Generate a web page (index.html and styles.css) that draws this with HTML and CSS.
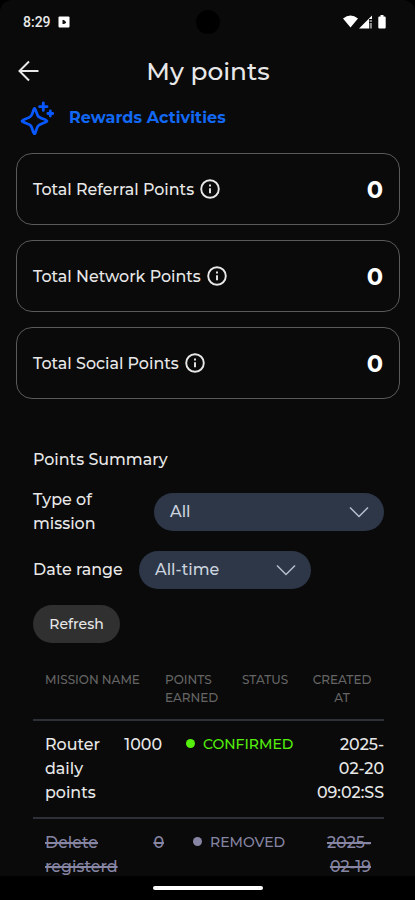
FILE: index.html
```html
<!DOCTYPE html>
<html lang="en">
<head>
    <meta charset="UTF-8">
    <meta name="viewport" content="width=device-width, initial-scale=1.0">
    <title>My points</title>
    <link rel="stylesheet" href="styles.css">
</head>
<body>
    <div class="screen">
        <div class="statusBar">
            <span class="clock">8:29</span>
            <svg class="appIcon" viewBox="0 0 12 12"><rect x="0.5" y="0.5" width="11" height="11" rx="1" fill="#fff"/><path d="M4.500 4h1.500L8 6v1L6 8H4.500z" fill="#111"/></svg>
            <span class="camera"></span>
            <svg class="signals" viewBox="0 0 46 16" fill="#fff">
                <path d="M0 4.500Q7.500-1.500 15 4.500L7.500 13.500z"/>
                <path d="M16 14.500 29 1.500V5h-3v9.500z"/>
                <path d="M26.500 6h2.500v2h-2.500zM26.500 9h2.500v5.500h-2.500z" fill="#888"/>
                <path d="M37.500 1h3v1.500h1.200q1 0 1 1v10q0 1-1 1h-5.400q-1 0-1-1v-10q0-1 1-1h1.200z"/>
            </svg>
        </div>
        <div class="header">
            <svg class="backIcon" viewBox="0 0 22 22"><path d="M20.500 11H1.500M11 1.500 1.500 11 11 20.500"/></svg>
            <h1>My points</h1>
        </div>
        <div class="rewards">
            <svg class="sparkIcon" viewBox="0 0 34 34">
                <path d="M14.500 7.500C15.500 7.500 16.500 12.500 18 15S27 18.500 27 20S20 22.500 18 25S15.700 33 14.500 33S12.500 27.500 11 25S2 21.500 2 20S9 17.500 11 15S13.500 7.500 14.500 7.500z"/>
                <path d="M23.300 2v7.400M19.600 5.700h7.400M30.300 10v5M27.800 12.500h5"/>
            </svg>
            <span>Rewards Activities</span>
        </div>

        <div class="cards">
            <div class="card">
                <span>Total Referral Points</span>
                <svg class="infoIcon" viewBox="0 0 20 20"><circle cx="10" cy="10" r="8.800"/><path d="M10 9.200v5M10 5.600v1.800"/></svg>
                <span class="cardValue">0</span>
            </div>
            <div class="card">
                <span>Total Network Points</span>
                <svg class="infoIcon" viewBox="0 0 20 20"><circle cx="10" cy="10" r="8.800"/><path d="M10 9.200v5M10 5.600v1.800"/></svg>
                <span class="cardValue">0</span>
            </div>
            <div class="card">
                <span>Total Social Points</span>
                <svg class="infoIcon" viewBox="0 0 20 20"><circle cx="10" cy="10" r="8.800"/><path d="M10 9.200v5M10 5.600v1.800"/></svg>
                <span class="cardValue">0</span>
            </div>
        </div>

        <div class="summary">
            <h2>Points Summary</h2>
            <div class="filter typeFilter">
                <span class="filterLabel">Type of mission</span>
                <div class="select">
                    <span>All</span>
                    <svg viewBox="0 0 20 12"><path d="M1 1.500 10 10.500 19 1.500"/></svg>
                </div>
            </div>
            <div class="filter dateFilter">
                <span class="filterLabel">Date range</span>
                <div class="select">
                    <span>All-time</span>
                    <svg viewBox="0 0 20 12"><path d="M1 1.500 10 10.500 19 1.500"/></svg>
                </div>
            </div>
            <button class="refresh" type="button">Refresh</button>

            <div class="table">
                <div class="row tableHead">
                    <span>MISSION NAME</span>
                    <span>POINTS<br>EARNED</span>
                    <span>STATUS</span>
                    <span>CREATED<br>AT</span>
                </div>
                <div class="row confirmed">
                    <span>Router daily points</span>
                    <span class="points">1000</span>
                    <span class="status"><i class="dot"></i>CONFIRMED</span>
                    <span class="date">2025-<br>02-20<br>09:02:SS</span>
                </div>
                <div class="row removed">
                    <span class="struck">Delete registerd</span>
                    <span class="points struck">0</span>
                    <span class="status"><i class="dot"></i>REMOVED</span>
                    <span class="date struck">2025-<br>02-19</span>
                </div>
            </div>
        </div>
        <div class="navBar"><span class="homeBar"></span></div>
    </div>
</body>
</html>
```
FILE: styles.css
```css
* {
    box-sizing: border-box;
}
body {
    margin: 0;
    background-color: #000;
    color: #e8e8e8;
    font-family: Montserrat, Inter, "Liberation Sans", sans-serif;
    font-size: 15.9px;
    font-weight: 500;
    line-height: 24px;
}
svg {
    display: block;
    flex: none;
}
.screen {
    display: flex;
    flex-direction: column;
    width: 415px;
    height: 900px;
    overflow: hidden;
    background-color: #0a0a0a;
    border-radius: 12px 12px 0 0;
    white-space: nowrap;
}
.statusBar {
    display: flex;
    flex: none;
    align-items: center;
    height: 43px;
    padding: 0 27px 0 23px;
}
.clock {
    width: 35px;
    font-family: Roboto, sans-serif;
    font-size: 14px;
}
.appIcon {
    width: 12px;
    height: 12px;
}
.camera {
    width: 24px;
    height: 24px;
    margin-left: 126px;
    border-radius: 50%;
    background-color: #000;
}
.signals {
    width: 46px;
    height: 16px;
    margin-left: auto;
    margin-right: -1px;
}
.header {
    display: grid;
    grid-template-columns: 22px 1fr 22px;
    align-items: center;
    flex: none;
    height: 56px;
    padding: 0 17px 0 18px;
}
.backIcon {
    width: 22px;
    height: 22px;
    fill: none;
    stroke: #e8e8e8;
    stroke-width: 2;
}
h1 {
    margin: 0;
    text-align: center;
    font-size: 24.8px;
    font-weight: 500;
}
.rewards {
    display: flex;
    flex: none;
    align-items: center;
    height: 38px;
    padding-left: 20px;
    gap: 15px;
    color: #1268f3;
    font-size: 16px;
    font-weight: 700;
    letter-spacing: 0.08px;
}
.sparkIcon {
    width: 34px;
    height: 34px;
    fill: none;
    stroke: #0758ff;
    stroke-width: 2.8;
    stroke-linejoin: round;
    stroke-linecap: round;
}
.cards {
    display: flex;
    flex: none;
    flex-direction: column;
    gap: 15px;
    padding: 16px 15px 0 16px;
}
.card {
    display: flex;
    align-items: center;
    height: 72px;
    padding: 0 16px;
    border: 1px solid #5a5a5a;
    border-radius: 16px;
}
.card span {
    padding-top: 2px;
}
.infoIcon {
    width: 20px;
    height: 20px;
    margin-left: 6px;
    fill: none;
    stroke: #e8e8e8;
    stroke-width: 1.9;
}
.cardValue {
    margin-left: auto;
    color: #fff;
    font-size: 24px;
    font-weight: 700;
}
.summary {
    display: flex;
    flex-direction: column;
    align-items: flex-start;
    flex: 1;
    min-height: 0;
    overflow: hidden;
    padding: 49px 31px 0 33px;
}
h2 {
    margin: 0 0 16px;
    font-size: 15.9px;
    font-weight: 500;
}
.filter {
    display: flex;
    align-items: center;
    width: 100%;
}
.typeFilter .filterLabel {
    width: 121px;
    padding-right: 50px;
    white-space: normal;
}
.typeFilter .select {
    width: 230px;
}
.dateFilter {
    margin-top: 15px;
}
.dateFilter .filterLabel {
    width: 106px;
}
.dateFilter .select {
    width: 172px;
}
.select {
    display: flex;
    align-items: center;
    justify-content: space-between;
    height: 38px;
    padding: 0 15px 0 16px;
    border-radius: 19px;
    background-color: #2d3748;
    color: #ccd4df;
}
.select svg {
    width: 20px;
    height: 12px;
    fill: none;
    stroke: #b7bfcb;
    stroke-width: 1.5;
}
.refresh {
    flex: none;
    width: 87px;
    height: 38px;
    margin-top: 16px;
    padding: 0;
    border: 0;
    border-radius: 19px;
    background-color: #303030;
    color: #e8e8e8;
    font: 500 14px Montserrat, Inter, sans-serif;
}
.table {
    width: 351px;
    margin-top: 16px;
}
.row {
    display: grid;
    padding: 12px 0 12px 12px;
    border-bottom: 2px solid #2d3037;
}
.tableHead {
    grid-template-columns: 120px 77px 60px 80px;
    color: #656565;
    font-size: 12px;
    line-height: 18px;
}
.tableHead span:last-child {
    text-align: center;
}
.confirmed {
    grid-template-columns: 73px 44px 128px 1fr;
}
.confirmed span:first-child {
    white-space: normal;
}
.points {
    text-align: right;
}
.status {
    display: flex;
    align-items: center;
    height: 21px;
    padding-left: 24px;
    font-size: 14px;
}
.confirmed .status {
    color: #55f00c;
}
.dot {
    flex: none;
    width: 9px;
    height: 9px;
    margin-right: 8px;
    border-radius: 50%;
    background-color: currentColor;
}
.date {
    text-align: right;
}
.removed {
    grid-template-columns: 74px 45px 128px 1fr;
    padding-right: 13px;
    color: #8685a3;
}
.removed .struck:first-child {
    white-space: normal;
}
.struck {
    text-decoration: line-through 2px;
}
.removed .status {
    padding-left: 29px;
}
.navBar {
    display: flex;
    flex: none;
    justify-content: center;
    align-items: center;
    height: 24px;
    background-color: #000;
}
.homeBar {
    width: 110px;
    height: 4px;
    border-radius: 2px;
    background-color: #fff;
}
```
